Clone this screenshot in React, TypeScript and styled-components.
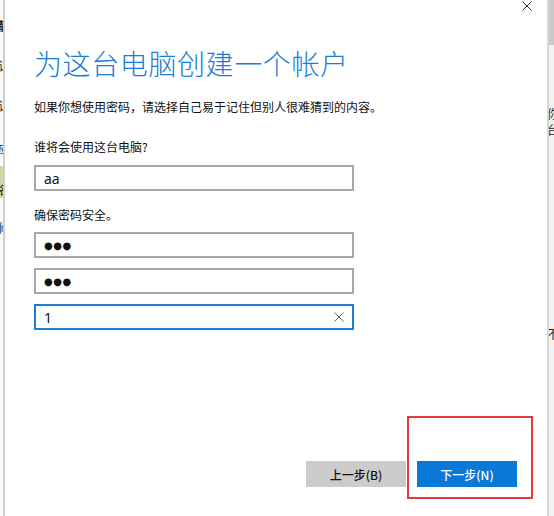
import React from 'react';
import styled, { createGlobalStyle } from 'styled-components';

const GlobalStyle = createGlobalStyle`
  html, body {
    margin: 0;
    padding: 0;
    background: #ffffff;
  }
  body {
    font-family: "Noto Sans CJK SC", "Noto Sans", sans-serif;
  }
`;

const Screen = styled.div`
  display: flex;
  width: 554px;
  height: 516px;
  overflow: hidden;
  background: #ffffff;
`;

const LeftPane = styled.div`
  width: 3px;
  flex-shrink: 0;
  overflow: hidden;
  background: #fafafa;
  border-right: 2px solid #cfcfcb;
  display: flex;
  flex-direction: column;
`;

const RightPane = styled.div`
  width: 5px;
  flex-shrink: 0;
  overflow: hidden;
  background: #f2f2f0;
  border-left: 2px solid #d6d6d2;
  display: flex;
  flex-direction: column;
`;

const ScrollThumb = styled.div`
  height: 45px;
  flex-shrink: 0;
  background: #c9c9c7;
`;

const Fragment = styled.div<{ $top: number; $bold?: boolean }>`
  margin-top: ${(p) => p.$top}px;
  height: 15px;
  line-height: 15px;
  font-size: 12px;
  white-space: nowrap;
  overflow: hidden;
  color: #222;
  font-weight: ${(p) => (p.$bold ? 700 : 400)};
  margin-left: -2px;
`;

const GreenBlock = styled.div`
  margin-top: 10px;
  height: 32px;
  background: #c5dba6;
  display: flex;
  align-items: flex-end;
  font-size: 12px;
  color: #222;
  margin-left: -2px;
  white-space: nowrap;
`;

const Dialog = styled.div`
  position: relative;
  flex: 1;
  display: flex;
  flex-direction: column;
  padding-left: 29px;
  background: #ffffff;
`;

const CloseButton = styled.button`
  position: absolute;
  top: 0;
  right: 13px;
  width: 14px;
  height: 12px;
  padding: 0;
  border: none;
  background: transparent;
  display: flex;
  align-items: center;
  justify-content: center;
`;

const Title = styled.h1`
  margin: 45px 0 0 0;
  font-size: 28px;
  line-height: 36px;
  font-weight: 300;
  color: #1a7ed6;
  letter-spacing: 0.6px;
`;

const Hint = styled.p<{ $top: number }>`
  margin: ${(p) => p.$top}px 0 0 0;
  font-size: 12px;
  line-height: 16px;
  color: #111;
`;

const Field = styled.div<{ $top: number; $focused?: boolean }>`
  margin-top: ${(p) => p.$top}px;
  width: 320px;
  height: 26px;
  box-sizing: border-box;
  border: 2px solid ${(p) => (p.$focused ? '#1a7ed6' : '#a8a8a8')};
  display: flex;
  align-items: center;
  padding: 0 8px 0 8px;
  background: #fff;
`;

const FieldText = styled.span`
  flex: 1;
  font-family: "Noto Sans", "Liberation Sans", sans-serif;
  font-size: 14px;
  color: #111;
`;

const Dots = styled.span`
  flex: 1;
  font-family: "DejaVu Sans", sans-serif;
  font-size: 10px;
  letter-spacing: 0.5px;
  color: #111;
`;

const Footer = styled.div`
  margin-top: auto;
  margin-bottom: 29px;
  margin-right: 30px;
  display: flex;
  justify-content: flex-end;
  gap: 11px;
`;

const ActionButton = styled.button<{ $primary?: boolean }>`
  width: 100px;
  height: 26px;
  border: none;
  padding: 0;
  font-family: "Noto Sans CJK SC", "Noto Sans", sans-serif;
  font-size: 12px;
  font-weight: 500;
  color: ${(p) => (p.$primary ? '#ffffff' : '#111111')};
  background: ${(p) => (p.$primary ? '#0a78d6' : '#cccccc')};
`;

const Highlight = styled.div`
  position: absolute;
  left: 402px;
  top: 416px;
  width: 126px;
  height: 83px;
  box-sizing: border-box;
  border: 2px solid #e33b3b;
  pointer-events: none;
`;

const XIcon = ({ size, color, width }: { size: number; color: string; width: number }) => (
  <svg width={size} height={size} viewBox="0 0 10 10">
    <path d="M0.5 0.5 L9.5 9.5 M9.5 0.5 L0.5 9.5" stroke={color} strokeWidth={width} fill="none" />
  </svg>
);

export default function App() {
  return (
    <>
      <GlobalStyle />
      <Screen>
        <LeftPane>
          <Fragment $top={18} $bold>
            静
          </Fragment>
          <Fragment $top={25}>订</Fragment>
          <Fragment $top={25}>订</Fragment>
          <Fragment $top={28}>应</Fragment>
          <GreenBlock>名</GreenBlock>
          <Fragment $top={22}>修</Fragment>
        </LeftPane>

        <Dialog>
          <CloseButton aria-label="关闭">
            <XIcon size={10} color="#333" width={1} />
          </CloseButton>

          <Title>为这台电脑创建一个帐户</Title>
          <Hint $top={18}>如果你想使用密码，请选择自己易于记住但别人很难猜到的内容。</Hint>

          <Hint $top={24}>谁将会使用这台电脑?</Hint>
          <Field $top={10}>
            <FieldText>aa</FieldText>
          </Field>

          <Hint $top={16}>确保密码安全。</Hint>
          <Field $top={9}>
            <Dots>●●●</Dots>
          </Field>
          <Field $top={10}>
            <Dots>●●●</Dots>
          </Field>
          <Field $top={10} $focused>
            <FieldText>1</FieldText>
            <XIcon size={10} color="#666" width={1} />
          </Field>

          <Footer>
            <ActionButton>上一步(B)</ActionButton>
            <ActionButton $primary>下一步(N)</ActionButton>
          </Footer>

          <Highlight />
        </Dialog>

        <RightPane>
          <ScrollThumb />
          <Fragment $top={61}>你</Fragment>
          <Fragment $top={1}>台</Fragment>
          <Fragment $top={189}>不</Fragment>
        </RightPane>
      </Screen>
    </>
  );
}
